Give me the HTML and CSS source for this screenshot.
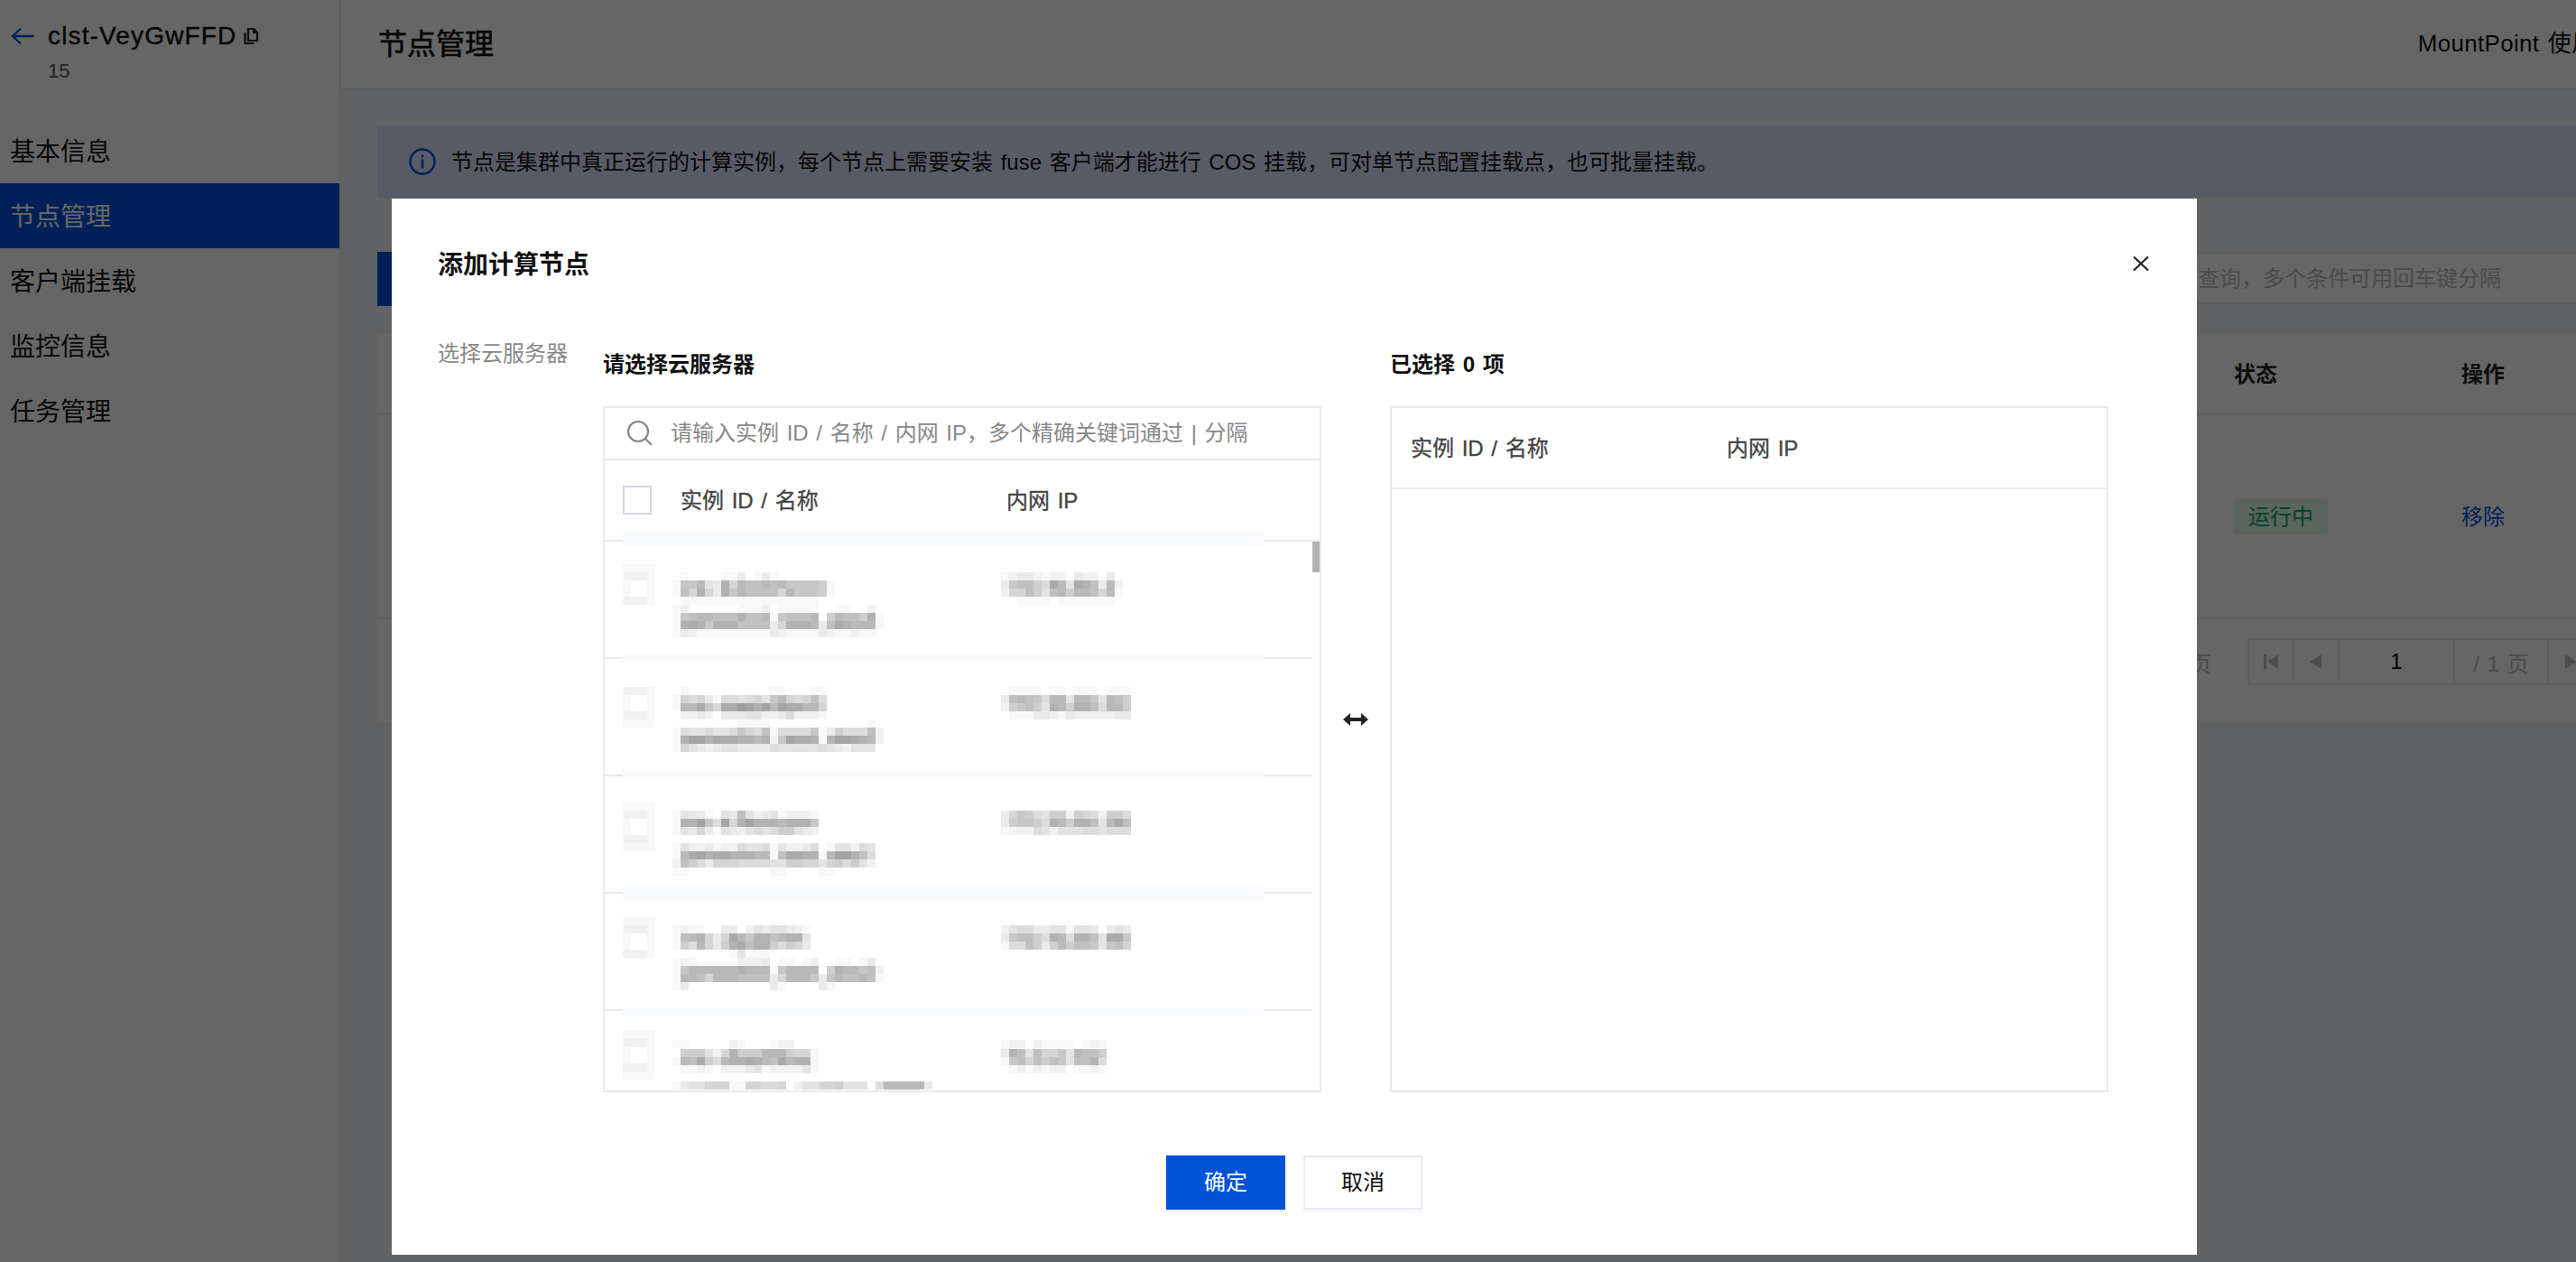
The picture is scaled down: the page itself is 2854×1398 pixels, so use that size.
FILE: index.html
```html
<!DOCTYPE html>
<html>
    <head>
        <meta charset="utf-8">
        <title>节点管理</title>
        <link rel="stylesheet" href="styles.css">
        <script src="mosaic.js" defer></script>
    </head>

    <body>
        <div class="page">
            <div class="sidebar">
                <div class="side-head">
                    <div class="side-title">
                        <svg class="back-icon" width="26" height="20" viewBox="0 0 26 20"><path d="M11 1.500 2 10l9 8.500M2 10h23.500" fill="none" stroke="#0052d9" stroke-width="2.400"/></svg>
                        <span class="cluster-name">clst-VeyGwFFD</span>
                        <svg class="copy-icon" width="18" height="20" viewBox="0 0 18 20"><path d="M6 2h6l4 4v9H6zM2.500 6v12h10" fill="none" stroke="#222" stroke-width="2.200"/><path d="M11 2h2l3 3v2h-5z" fill="#222"/></svg>
                    </div>
                    <div class="cluster-sub">15</div>
                </div>
                <div class="nav-item">基本信息</div>
                <div class="nav-item active">节点管理</div>
                <div class="nav-item">客户端挂载</div>
                <div class="nav-item">监控信息</div>
                <div class="nav-item">任务管理</div>
            </div>

            <div class="main">
                <div class="main-head">
                    <h1 class="main-title">节点管理</h1>
                    <span class="head-link">MountPoint 使用指引</span>
                </div>

                <div class="content">
                    <div class="alert">
                        <svg width="30" height="30" viewBox="0 0 30 30"><circle cx="15" cy="15" r="13.500" fill="none" stroke="#0052d9" stroke-width="2.400"/><rect x="13.800" y="7.500" width="2.500" height="3" fill="#0052d9"/><rect x="13.800" y="12.500" width="2.500" height="10" fill="#0052d9"/></svg>
                        <span class="alert-text">节点是集群中真正运行的计算实例，每个节点上需要安装 fuse 客户端才能进行 COS 挂载，可对单节点配置挂载点，也可批量挂载。</span>
                    </div>

                    <div class="toolbar">
                        <div class="add-btn"></div>
                        <div class="filter">请输入关键词查询，多个条件可用回车键分隔</div>
                    </div>

                    <div class="card">
                        <div class="card-row card-head">
                            <div></div>
                            <div>状态</div>
                            <div>操作</div>
                        </div>
                        <div class="card-row card-body">
                            <div></div>
                            <div><span class="tag">运行中</span></div>
                            <div class="link">移除</div>
                        </div>
                        <div class="card-foot">
                            <span class="per-page">页</span>
                            <div class="pager">
                                <div class="pager-btn"><svg width="16" height="16" viewBox="0 0 16 16"><path d="M0 0h3v16H0zM16 0v16L4 8z" fill="#bdbdbd"/></svg></div>
                                <div class="pager-btn"><svg width="14" height="16" viewBox="0 0 14 16"><path d="M13 0v16L0 8z" fill="#bdbdbd"/></svg></div>
                                <div class="pager-num">1</div>
                                <div class="pager-total">/ 1 页</div>
                                <div class="pager-btn"><svg width="14" height="16" viewBox="0 0 14 16"><path d="M1 0v16l13-8z" fill="#bdbdbd"/></svg></div>
                                <div class="pager-btn"><svg width="16" height="16" viewBox="0 0 16 16"><path d="M13 0h3v16h-3zM0 0v16l12-8z" fill="#bdbdbd"/></svg></div>
                            </div>
                        </div>
                    </div>
                </div>
            </div>
        </div>

        <div class="overlay">
            <div class="modal">
                <div class="modal-head">
                    <div class="modal-title">添加计算节点</div>
                    <svg width="18" height="18" viewBox="0 0 18 18"><path d="M1 1.500 17 16.500M17 1.500 1 16.500" fill="none" stroke="#222" stroke-width="2.200"/></svg>
                </div>

                <div class="modal-body">
                    <div class="field-label">选择云服务器</div>
                    <div class="transfer">
                        <div class="pane">
                            <div class="pane-title">请选择云服务器</div>
                            <div class="box">
                                <div class="search">
                                    <svg width="30" height="28" viewBox="0 0 30 28"><circle cx="13" cy="12" r="11" fill="none" stroke="#888" stroke-width="2.200"/><path d="m21 20 7 7" stroke="#888" stroke-width="2.200"/></svg>
                                    <span class="search-text">请输入实例 ID / 名称 / 内网 IP，多个精确关键词通过 | 分隔</span>
                                </div>
                                <div class="table-head">
                                    <div class="check"></div>
                                    <div class="col-name">实例 ID / 名称</div>
                                    <div>内网 IP</div>
                                </div>
                                <div class="list">
                                    <div class="list-row"></div>
                                    <div class="list-row"></div>
                                    <div class="list-row"></div>
                                    <div class="list-row"></div>
                                    <div class="list-row"></div>
                                    <div class="scroll-thumb"></div>
                                </div>
                                <svg id="mosaic" class="mosaic" width="792" height="756" viewBox="670 452 792 756" shape-rendering="crispEdges"></svg>
                            </div>
                        </div>

                        <div class="swap">
                            <svg width="28" height="14" viewBox="0 0 28 14"><path d="M0 7 8 0v5h12V0l8 7-8 7V9H8v5z" fill="#222"/></svg>
                        </div>

                        <div class="pane">
                            <div class="pane-title">已选择 0 项</div>
                            <div class="box">
                                <div class="table-head picked">
                                    <div class="col-name">实例 ID / 名称</div>
                                    <div>内网 IP</div>
                                </div>
                            </div>
                        </div>
                    </div>
                </div>

                <div class="modal-foot">
                    <div class="btn primary">确定</div>
                    <div class="btn">取消</div>
                </div>
            </div>
        </div>
    </body>
</html>
```

FILE: styles.css
```css
* {box-sizing: border-box;}

html, body {
    margin: 0;
    height: 100%;
    overflow: hidden;
}

body {
    font-family: "Liberation Sans", "Noto Sans CJK SC", sans-serif;
    font-size: 24px;
    word-spacing: 2px;
    color: #111;
    background-color: #f3f4f7;
}

svg {display: block; flex: none;}

.page {
    display: flex;
    width: 2982px;
    height: 1398px;
}

/* sidebar */
.sidebar {
    width: 378px;
    flex: none;
    background-color: #fff;
    border-right: 2px solid #eceef2;
}

.side-head {
    height: 131px;
    padding: 20px 0 0 12px;
}

.side-title {
    display: flex;
    align-items: center;
    height: 40px;
}

.back-icon {margin-right: 15px;}

.cluster-name {
    font-size: 28px;
    letter-spacing: 1.150px;
    -webkit-text-stroke: 0.4px #111;
    color: #111;
}

.copy-icon {margin-left: 7px;}

.cluster-sub {
    margin-left: 41px;
    line-height: 38px;
    font-size: 22px;
    color: #555;
}

.nav-item {
    height: 72px;
    line-height: 75px;
    padding-left: 11px;
    font-size: 28px;
    color: #111;
}

.nav-item.active {
    background-color: #0052d9;
    color: #fff;
}

/* main */
.main {flex: 1;}

.main-head {
    display: flex;
    justify-content: space-between;
    align-items: center;
    height: 99px;
    padding: 0 54px 0 41px;
    background-color: #fff;
    border-bottom: 2px solid #e7eaef;
}

.main-title {
    margin: 0;
    padding-bottom: 6px;
    font-size: 32px;
    font-weight: 400;
    -webkit-text-stroke: 0.6px #111;
}

.head-link {
    padding-bottom: 6px;
    font-size: 26px;
    letter-spacing: 0.3px;
    white-space: nowrap;
}

.content {padding: 40px 40px 0 40px;}

.alert {
    display: flex;
    align-items: center;
    gap: 17px;
    height: 80px;
    padding-left: 35px;
    background-color: #dce4ff;
}

.alert-text {padding-bottom: 3px;}

.toolbar {
    display: flex;
    justify-content: space-between;
    margin-top: 60px;
}

.add-btn {
    width: 200px;
    height: 60px;
    background-color: #0052d9;
}

.filter {
    width: 673px;
    height: 58px;
    line-height: 56px;
    padding-left: 20px;
    background-color: #fff;
    border: 2px solid #e7eaef;
    color: #bbb;
    white-space: nowrap;
    overflow: hidden;
}

.card {
    margin-top: 31px;
    height: 430px;
    background-color: #fff;
}

.card-row {
    display: grid;
    grid-template-columns: 1fr 252px 235px;
    align-items: center;
}

.card-row > div {padding-left: 20px;}

.card-head {
    height: 90px;
    padding-bottom: 3px;
    border-bottom: 2px solid #e7eaef;
    font-weight: 700;
    color: #222;
}

.card-body {
    height: 226px;
    border-bottom: 2px solid #e7eaef;
}

.tag {
    display: inline-block;
    width: 104px;
    height: 39px;
    line-height: 39px;
    text-align: center;
    border-radius: 3px;
    background-color: #e3f9e9;
    color: #00a870;
}

.card-body .link {
    padding-bottom: 3px;
    color: #0052d9;
}

.card-foot {
    display: flex;
    justify-content: flex-end;
    align-items: center;
    gap: 42px;
    padding: 21px 18px 0 0;
}

.per-page {color: #bbb;}

.pager {
    display: flex;
    height: 52px;
}

.pager > div {
    display: flex;
    align-items: center;
    justify-content: center;
    border: 2px solid #e7eaef;
    margin-left: -2px;
}

.pager-btn {width: 52px;}
.pager-num {width: 130px; color: #000;}
.pager-total {width: 106px; color: #bbb;}

/* dialog */
.overlay {
    position: fixed;
    top: 0;
    left: 0;
    width: 100%;
    height: 100%;
    background-color: rgba(0, 0, 0, 0.6);
}

.modal {
    width: 2000px;
    height: 1170px;
    margin: 220px 0 0 434px;
    background-color: #fff;
}

.modal-head {
    display: flex;
    justify-content: space-between;
    align-items: center;
    height: 92px;
    padding: 52px 53px 0 51px;
}

.modal-title {
    padding-top: 3px;
    font-size: 28px;
    font-weight: 700;
    line-height: 40px;
}

.modal-body {
    display: flex;
    margin-top: 60px;
    padding-left: 51px;
}

.field-label {
    width: 183px;
    line-height: 40px;
    color: #888;
}

.transfer {
    display: flex;
    padding-top: 11px;
}

.pane {width: 796px;}

.pane-title {
    height: 40px;
    line-height: 42px;
    margin-bottom: 27px;
    font-weight: 700;
}

.box {
    position: relative;
    height: 760px;
    border: 2px solid #e7eaef;
    overflow: hidden;
}

.search {
    display: flex;
    align-items: center;
    height: 58px;
    padding-left: 24px;
    border-bottom: 2px solid #e7eaef;
    color: #888;
    gap: 19px;
    white-space: nowrap;
}

.search-text {padding-bottom: 5px;}

.table-head {
    display: flex;
    align-items: center;
    height: 90px;
    padding-left: 20px;
    border-bottom: 2px solid #e7eaef;
    -webkit-text-stroke: 0.35px #444;
    color: #444;
}

.table-head > div:not(.check) {padding-bottom: 3px;}

.table-head.picked {padding-left: 21px;}

.check {
    width: 32px;
    height: 32px;
    margin-right: 32px;
    border: 2px solid #d3d8e0;
}

.col-name {width: 361px;}
.picked .col-name {width: 350px;}

.list {
    position: relative;
    height: 608px;
    overflow: hidden;
}

.list-row {
    width: 784px;
    height: 130px;
    border-bottom: 2px solid #e7eaef;
}

.scroll-thumb {
    position: absolute;
    top: 0;
    left: 784px;
    width: 8px;
    height: 34px;
    background-color: #b3b3b3;
}

.mosaic {
    position: absolute;
    top: 0;
    left: 0;
}

.swap {
    display: flex;
    align-items: center;
    justify-content: center;
    width: 76px;
}

.modal-foot {
    display: flex;
    justify-content: center;
    gap: 20px;
    margin-top: 70px;
}

.btn {
    width: 132px;
    height: 60px;
    line-height: 56px;
    text-align: center;
    border: 2px solid #e7eaef;
    box-shadow: 0 4px 0 #f9fafd;
}

.btn.primary {
    background-color: #0052d9;
    border-color: #0052d9;
    box-shadow: 0 4px 0 #f3f6fd;
    color: #fff;
}
```

FILE: mosaic.js
```js
// pixelated rows of the instance list, one hex digit per 9px cell (0 = white)
var patches = [
    // row 1
    [690, 625, ['1111', '2221', '1001', '1001', '2221']],
    [745, 634, ['0100001130131', '188a43b6a99a9a888871', '196b63b8a99996a88871', '0111111111111111110',
                '12000000111201111100110020', '189aa999b99a18999a07a997b1', '1bcb8bbb999936bbba39cbaaa1', '13211111111132111132112110']],
    [1109, 634, ['123321220322030', '389975ca4cb93a2', '2669749a7aa96a1', '001111011111110']],
    // row 2
    [690, 761, ['2221', '1001', '1001', '2221', '1111']],
    [745, 761, ['0100000000001100011', '1656315545648a65695', '1aac86ccedbdadccaa6', '0223203334422352221',
                '00000000111100000000000010', '15445445865915555813755592', '1bddbcccbbab28dccb1bddcba2', '16432344333354444454324440']],
    [1109, 761, ['0111101101110111', '39a985aa4aa84a97', '278974ba7bb95aa7', '0111332132222233']],
    // row 3
    [690, 889, ['1111', '2221', '1001', '1001', '2221', '1111']],
    [745, 898, ['143310439423412221', '1bbd85d6bdbbbabbb8', '143631432454577432']],
    [745, 934, ['1422312254451422350144254', '1acdbccbbbaa19ccbb1addb95', '2975366655554477664675742', '1100000000001100001100000']],
    [1109, 898, ['3687547727652775', '378875ba7bb94ac9', '1222542444554555']],
    // row 4
    [690, 1016, ['1111', '2221', '1001', '1001', '2221']],
    [745, 1025, ['12110033024344321', '19ab636ca8bb9abb4', '175a637bc9bb75763', '00000001411100000']],
    [745, 1061, ['12100000222301101200110130', '18aaaaaabaaa18aaaa07baa892', '1aa96aaa999936aaa838a99a91', '1300000000003100003100000']],
    [1109, 1025, ['2455334414430343', '389975ba5bb94cc8', '1559737a79984896']],
    // row 5
    [690, 1142, ['1111', '2221', '1001', '1001', '2221', '1111']],
    [745, 1152, ['110000021000122000']],
    [745, 1162, ['0777426b777aaa7661', '1a9c75abbcba9cabb1']],
    [745, 1180, ['011210222341222241']],
    [745, 1198, ['13446661166556024466744405aaaaa3']],
    [1109, 1152, ['1220211110121']],
    [1109, 1162, ['3b9496684a997', '18969798499b5']],
    [1109, 1180, ['0121212201121']]
];

// the blur also washes out the row lines under it
var bands = [[589, 16], [725, 9], [852, 9], [980, 18], [1116, 9]];

var html = '';
for (var b = 0; b < bands.length; b++) {
    html += '<rect x="690" y="' + bands[b][0] + '" width="710" height="' + bands[b][1] + '" fill="#fafbfd"/>';
}

for (var p = 0; p < patches.length; p++) {
    var rows = patches[p][2];
    for (var r = 0; r < rows.length; r++) {
        for (var c = 0; c < rows[r].length; c++) {
            var level = parseInt(rows[r][c], 16);
            if (level == 0) continue;
            var gray = 255 - level * 7;
            html += '<rect x="' + (patches[p][0] + c * 9) + '" y="' + (patches[p][1] + r * 9) + '" width="9" height="9" fill="rgb(' + gray + ',' + gray + ',' + gray + ')"/>';
        }
    }
}

document.getElementById('mosaic').innerHTML = html;
```
